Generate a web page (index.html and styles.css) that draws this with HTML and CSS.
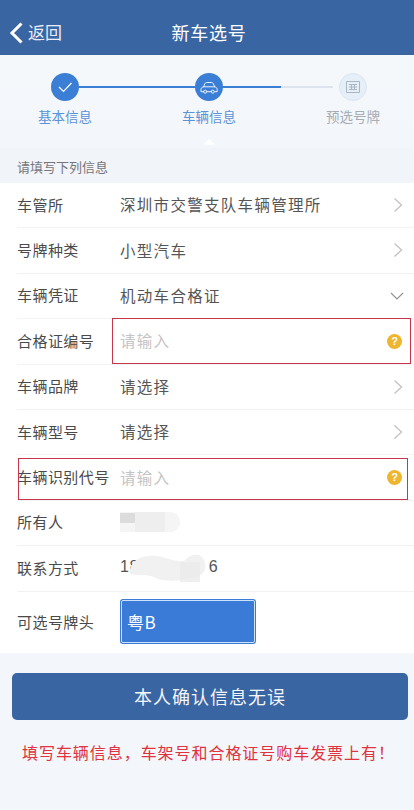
FILE: index.html
```html
<!DOCTYPE html>
<html lang="zh-CN">
<head>
<meta charset="utf-8">
<title>新车选号</title>
<link rel="stylesheet" href="styles.css">
</head>
<body>
<div class="page">
  <header class="nav">
    <div class="back">
      <svg class="back-icon" viewBox="0 0 14 22" width="14" height="22"><path d="M12.500 1.500 3 11l9.500 9.500" fill="none" stroke="#fff" stroke-width="3"/></svg>
      <span>返回</span>
    </div>
    <h1>新车选号</h1>
  </header>

  <section class="steps">
    <div class="track"><span class="track-done"></span><span class="track-todo"></span></div>
    <div class="step done">
      <span class="dot">
        <svg viewBox="0 0 28 28" width="28" height="28"><path d="M8 14l4.500 4.500L20.500 10" fill="none" stroke="#fff" stroke-width="1.200"/></svg>
      </span>
      <span class="step-label">基本信息</span>
    </div>
    <div class="step done">
      <span class="dot">
        <svg viewBox="0 0 28 28" width="28" height="28"><path d="M6 16.500c0-1.500 1-2.300 2.500-2.700l1.500-3.300c.3-.7.900-1 1.600-1h5c.7 0 1.300.3 1.600 1l1.500 3.300c1.500.4 2.500 1.200 2.500 2.700v2.200h-2.500M9 18.700H6v-2.200M11.500 18.700h5M8 13.800h12" fill="none" stroke="#fff" stroke-width=".9"/><circle cx="10.200" cy="18.700" r="1.500" fill="none" stroke="#fff" stroke-width=".9"/><circle cx="17.800" cy="18.700" r="1.500" fill="none" stroke="#fff" stroke-width=".9"/></svg>
      </span>
      <span class="step-label">车辆信息</span>
      <span class="caret"></span>
    </div>
    <div class="step todo">
      <span class="dot">
        <svg viewBox="0 0 28 28" width="28" height="28"><path d="M7.500 8.500h13v11h-13zM10 11.500h8M10 14h8M10 16.500h8M12.500 11v6M15.500 11v6" fill="none" stroke="#a9b6c6" stroke-width="1"/></svg>
      </span>
      <span class="step-label">预选号牌</span>
    </div>
  </section>

  <div class="hint">请填写下列信息</div>

  <section class="form">
    <div class="row">
      <span class="label">车管所</span><span class="value">深圳市交警支队车辆管理所</span>
      <svg class="arrow" viewBox="0 0 10 16" width="10" height="16"><path d="M1.500 1.500 8.500 8l-7 6.500" fill="none" stroke="#c4c4c8" stroke-width="1.400"/></svg>
    </div>
    <div class="row">
      <span class="label">号牌种类</span><span class="value">小型汽车</span>
      <svg class="arrow" viewBox="0 0 10 16" width="10" height="16"><path d="M1.500 1.500 8.500 8l-7 6.500" fill="none" stroke="#c4c4c8" stroke-width="1.400"/></svg>
    </div>
    <div class="row">
      <span class="label">车辆凭证</span><span class="value">机动车合格证</span>
      <svg class="arrow-down" viewBox="0 0 14 8" width="14" height="8"><path d="M1 1l6 6 6-6" fill="none" stroke="#8f8f94" stroke-width="1.100"/></svg>
    </div>
    <div class="row">
      <span class="label">合格证编号</span><span class="value placeholder">请输入</span>
      <span class="help">?</span>
      <span class="mark mark-a"></span>
    </div>
    <div class="row">
      <span class="label">车辆品牌</span><span class="value">请选择</span>
      <svg class="arrow" viewBox="0 0 10 16" width="10" height="16"><path d="M1.500 1.500 8.500 8l-7 6.500" fill="none" stroke="#c4c4c8" stroke-width="1.400"/></svg>
    </div>
    <div class="row">
      <span class="label">车辆型号</span><span class="value">请选择</span>
      <svg class="arrow" viewBox="0 0 10 16" width="10" height="16"><path d="M1.500 1.500 8.500 8l-7 6.500" fill="none" stroke="#c4c4c8" stroke-width="1.400"/></svg>
    </div>
    <div class="row">
      <span class="label">车辆识别代号</span><span class="value placeholder">请输入</span>
      <span class="help">?</span>
      <span class="mark mark-b"></span>
    </div>
    <div class="row">
      <span class="label">所有人</span>
      <span class="value"><span class="blur-name"><i></i><b></b></span></span>
    </div>
    <div class="row">
      <span class="label">联系方式</span>
      <span class="value phone">18<span class="phone-gap"></span>6
        <svg class="blur-phone" viewBox="0 0 78 28" width="78" height="28"><path d="M0 15C4 4 14 1 26 2c10 1 18 6 28 5 6-7 14-8 18-4 4 5 5 11 1 16-4 4-9 5-17 6-8 2-16 2-24 1-6-1-10-5-18-5-5 0-10 0-14-1z" fill="#f1f1f1"/><path d="M50 8h20v20H50z" fill="#ebebeb" opacity=".8"/></svg>
      </span>
    </div>
    <div class="row row-last">
      <span class="label">可选号牌头</span>
      <span class="plate"><span>粤B</span></span>
    </div>
  </section>

  <div class="actions">
    <button class="confirm" type="button">本人确认信息无误</button>
    <p class="warn">填写车辆信息，车架号和合格证号购车发票上有！</p>
  </div>
</div>
</body>
</html>
```
FILE: styles.css
```css
* { box-sizing: border-box; }
html, body { margin: 0; padding: 0; }
body {
  width: 414px;
  height: 810px;
  overflow: hidden;
  background: #f3f6fa;
  font-family: "Noto Sans CJK SC", "Liberation Sans", sans-serif;
  color: #444;
}
.page { display: flex; flex-direction: column; height: 810px; }

.nav {
  position: relative;
  flex: none;
  height: 55px;
  padding: 11px 0 0 9px;
  background: #3a65a3;
  color: #fff;
  display: flex;
  align-items: center;
}
.back { display: flex; align-items: center; gap: 5px; font-size: 17px; line-height: 22px; color: #e8eef7; }
.back span { position: relative; top: -1px; }
.back-icon { display: block; }
.nav h1 {
  position: absolute;
  left: 4px;
  right: 0;
  top: 9px;
  bottom: 0;
  margin: 0;
  display: flex;
  align-items: center;
  justify-content: center;
  font-size: 18px;
  font-weight: 400;
  letter-spacing: .7px;
}

.steps {
  position: relative;
  flex: none;
  height: 93px;
  padding-top: 18px;
  display: grid;
  grid-template-columns: 144px 144px 144px;
  margin-left: -7px;
  background: linear-gradient(#f5f8fb, #f3f6fa);
}
.track {
  position: absolute;
  left: 86px;
  top: 31px;
  width: 254px;
  height: 1.500px;
  display: flex;
}
.track-done { width: 202px; background: #3a7fd5; }
.track-todo { flex: 1; background: #dbe4ef; }
.step { position: relative; display: flex; flex-direction: column; align-items: center; }
.dot {
  position: relative;
  width: 28px;
  height: 28px;
  border-radius: 50%;
  background: #3a7fd5;
  display: block;
}
.dot svg { display: block; }
.step.todo .dot { background: #e6eef7; border: 1px solid #dbe6f2; }
.step.todo .dot svg { margin: -1px; }
.step-label {
  margin-top: 5px;
  font-size: 13.500px;
  line-height: 20px;
  color: #5b93d6;
}
.step.todo .step-label { color: #a4acb6; }
.caret {
  position: absolute;
  left: 66px;
  top: 66px;
  width: 0;
  height: 0;
  border-left: 6px solid transparent;
  border-right: 6px solid transparent;
  border-bottom: 6px solid #fff;
}

.hint {
  flex: none;
  height: 36px;
  margin-top: -1px;
  padding: 11px 0 0 17px;
  font-size: 13px;
  line-height: 18px;
  color: #76767a;
  background: #f1f4f8;
}

.form { flex: none; background: #fff; padding-left: 17px; }
.row {
  position: relative;
  height: 45.400px;
  padding-bottom: 2px;
  display: flex;
  align-items: center;
  border-bottom: 1px solid #f1f2f4;
}
.row:nth-child(3), .row:nth-child(6) { border-bottom-color: #f4f4f5; }
.row-last { height: 61px; border-bottom: 0; padding-bottom: 1px; }
.label {
  flex: none;
  width: 103px;
  font-size: 15px;
  letter-spacing: .45px;
  color: #4a4a4a;
  white-space: nowrap;
}
.value {
  flex: 1;
  position: relative;
  font-size: 15.500px;
  letter-spacing: 1.300px;
  color: #555;
  white-space: nowrap;
}
.placeholder { color: #c4c4c4; }
.arrow { position: absolute; right: 11px; top: 14px; }
.arrow-down { position: absolute; right: 10px; top: 18px; }
.help {
  position: absolute;
  right: 12px;
  top: 15px;
  width: 15px;
  height: 15px;
  border-radius: 50%;
  background: #efb52f;
  color: #fff;
  font: 700 11px/15px "Liberation Sans", sans-serif;
  text-align: center;
}
.mark { position: absolute; border: 1px solid #c8364b; pointer-events: none; }
.mark-a { left: 95px; right: 3px; top: -1px; height: 46px; }
.mark-b { left: 1px; right: 6px; top: 3px; height: 42px; }

.blur-name {
  display: block;
  width: 60px;
  height: 20px;
  border-radius: 0 9px 9px 0;
  background: #f5f5f5;
  position: relative;
  overflow: hidden;
}
.blur-name i {
  position: absolute;
  left: 0;
  top: 1px;
  width: 15px;
  height: 10px;
  background: #dcdcdc;
}
.blur-name b {
  position: absolute;
  left: 15px;
  top: 0;
  width: 30px;
  height: 20px;
  background: #eeeeee;
}
.phone { letter-spacing: .5px; font-family: "Liberation Sans", "Noto Sans CJK SC", sans-serif; font-size: 16px; color: #555; }
.phone-gap { display: inline-block; width: 70px; }
.blur-phone {
  position: absolute;
  left: 10px;
  top: -4px;
}

.plate {
  width: 136px;
  height: 45px;
  padding: 1px;
  border-radius: 3px;
  background: #3a7bd8;
}
.plate span {
  display: flex;
  align-items: center;
  height: 100%;
  padding-left: 5px;
  border: 1px solid #cfe2fa;
  border-radius: 2px;
  font-size: 17px;
  letter-spacing: .5px;
  color: #fff;
}

.actions { flex: 1; padding: 20px 6px 0 12px; background: #f3f6fa; }
.confirm {
  display: block;
  width: 396px;
  height: 47px;
  border: 0;
  border-radius: 5px;
  background: #3a65a3;
  color: #f2f5fa;
  font-family: inherit;
  font-size: 18px;
  letter-spacing: 1px;
  cursor: pointer;
}
.warn {
  margin: 21px 0 0 10px;
  font-size: 16px;
  line-height: 22px;
  letter-spacing: .95px;
  color: #e0333f;
  white-space: nowrap;
}
```
